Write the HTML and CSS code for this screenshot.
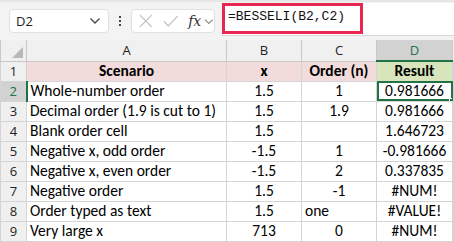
FILE: index.html
```html
<!DOCTYPE html>
<html>
<head>
    <title>BESSELI</title>
    <link rel="stylesheet" href="styles.css">
</head>
<body>
    <div class="toolbar">
        <div class="name-box">
            <span>D2</span>
            <svg class="chevron" width="12" height="8" viewBox="0 0 12 8"><path d="M1.5 1.5 L6 6 L10.5 1.5" fill="none" stroke="#444" stroke-width="1.3"/></svg>
        </div>
        <div class="dots"><i></i><i></i><i></i></div>
        <div class="fx-box">
            <svg width="14" height="14" viewBox="0 0 14 14"><path d="M1 1 L13 13 M13 1 L1 13" stroke="#bdbdbd" stroke-width="1.2"/></svg>
            <svg width="16" height="14" viewBox="0 0 16 14"><path d="M1 7.5 L5.5 12 L15 2" fill="none" stroke="#bdbdbd" stroke-width="1.2"/></svg>
            <span class="fx">fx</span>
            <svg width="10" height="7" viewBox="0 0 10 7"><path d="M1 1.5 L5 5.5 L9 1.5" fill="none" stroke="#888" stroke-width="1.1"/></svg>
        </div>
        <div class="formula-bar">
            <div class="formula">=BESSELI(B2,C2)</div>
        </div>
    </div>

    <table class="sheet">
        <colgroup>
            <col class="c-hdr"><col class="c-a"><col class="c-b"><col class="c-c"><col class="c-d"><col>
        </colgroup>
        <tr class="col-heads">
            <th class="corner"><span class="tri"></span></th>
            <th>A</th><th>B</th><th>C</th><th class="sel">D</th><th class="rest"></th>
        </tr>
        <tr>
            <th class="row-head">1</th>
            <td class="title">Scenario</td><td class="title">x</td><td class="title">Order (n)</td><td class="title result">Result</td><td class="rest"></td>
        </tr>
        <tr>
            <th class="row-head sel">2</th>
            <td>Whole-number order</td><td class="num">1.5</td><td class="num">1</td><td class="num active">0.981666<span class="handle"></span></td><td class="rest"></td>
        </tr>
        <tr>
            <th class="row-head">3</th>
            <td>Decimal order (1.9 is cut to 1)</td><td class="num">1.5</td><td class="num">1.9</td><td class="num">0.981666</td><td class="rest"></td>
        </tr>
        <tr>
            <th class="row-head">4</th>
            <td>Blank order cell</td><td class="num">1.5</td><td class="num"></td><td class="num">1.646723</td><td class="rest"></td>
        </tr>
        <tr>
            <th class="row-head">5</th>
            <td>Negative x, odd order</td><td class="num">-1.5</td><td class="num">1</td><td class="num">-0.981666</td><td class="rest"></td>
        </tr>
        <tr>
            <th class="row-head">6</th>
            <td>Negative x, even order</td><td class="num">-1.5</td><td class="num">2</td><td class="num">0.337835</td><td class="rest"></td>
        </tr>
        <tr>
            <th class="row-head">7</th>
            <td>Negative order</td><td class="num">1.5</td><td class="num">-1</td><td class="num">#NUM!</td><td class="rest"></td>
        </tr>
        <tr>
            <th class="row-head">8</th>
            <td>Order typed as text</td><td class="num">1.5</td><td>one</td><td class="num">#VALUE!</td><td class="rest"></td>
        </tr>
        <tr>
            <th class="row-head">9</th>
            <td>Very large x</td><td class="num">713</td><td class="num">0</td><td class="num">#NUM!</td><td class="rest"></td>
        </tr>
    </table>
</body>
</html>
```

FILE: styles.css
```css
* {
    box-sizing: border-box;
}
body {
    margin: 0;
    width: 454px;
    height: 242px;
    overflow: hidden;
    background: #ffffff;
    font-family: Carlito, Lato, "Liberation Sans", sans-serif;
}
.toolbar {
    height: 40px;
    display: flex;
    align-items: center;
    background: #f3f3f3;
    border-top: 2px solid #e6e6e6;
}
.name-box {
    width: 100px;
    height: 24px;
    margin-left: 9px;
    display: flex;
    align-items: center;
    justify-content: space-between;
    padding: 0 7px 0 6px;
    background: #ffffff;
    border: 1px solid #e0e0e0;
    border-radius: 4px;
    font-family: "Open Sans", sans-serif;
    font-size: 13px;
    color: #1f1f1f;
}
.dots {
    width: 22px;
    display: flex;
    flex-direction: column;
    align-items: center;
    gap: 2px;
}
.dots i {
    width: 2px;
    height: 2px;
    background: #444;
}
.fx-box {
    width: 84px;
    height: 24px;
    display: flex;
    align-items: center;
    gap: 10px;
    padding-left: 7px;
    background: #ffffff;
    border: 1px solid #e0e0e0;
    border-radius: 4px;
}
.fx-box .fx {
    font-family: "DejaVu Serif", serif;
    font-style: italic;
    font-size: 14px;
    color: #333;
    margin-right: -7px;
}
.formula-bar {
    flex: 1;
    align-self: stretch;
    margin: 1px 0 4px 7px;
    background: #ffffff;
    border-bottom: 1px solid #d6d6d6;
}
.formula {
    width: 141px;
    height: 31px;
    border: 3px solid #e8264f;
    padding: 3px 0 0 3px;
    font-family: "Liberation Mono", monospace;
    font-size: 13px;
    color: #111;
}
.sheet {
    border-collapse: collapse;
    table-layout: fixed;
    width: 454px;
    font-size: 15.5px;
    color: #000;
}
.c-hdr { width: 26px; }
.c-a { width: 200px; }
.c-b { width: 75px; }
.c-c { width: 75px; }
.c-d { width: 76px; }
.sheet th,
.sheet td {
    height: 20px;
    padding: 0 3px;
    border: 1px solid #d4d4d4;
    white-space: nowrap;
    overflow: hidden;
    line-height: 18px;
}
.col-heads th {
    height: 21px;
    background: #f0f0f0;
    font-weight: normal;
    color: #222;
    border-color: #c8c8c8;
    border-top: none;
    font-family: "Open Sans", sans-serif;
    font-size: 13px;
}
.col-heads th.sel {
    background: #d2d2d2;
    color: #217346;
    border-bottom: 2px solid #217346;
}
.corner {
    position: relative;
}
.tri {
    position: absolute;
    right: 3px;
    bottom: 3px;
    width: 0;
    height: 0;
    border-left: 11px solid transparent;
    border-bottom: 11px solid #b8b8b8;
}
.row-head {
    background: #f0f0f0;
    font-weight: normal;
    color: #222;
    text-align: center;
    border-color: #c8c8c8;
    font-family: "Open Sans", sans-serif;
    font-size: 13px;
    border-left: none;
}
.row-head.sel {
    background: #d2d2d2;
    color: #217346;
    border-right: 2px solid #217346;
}
.title {
    background: #f2dcdb;
    font-weight: bold;
    text-align: center;
}
.title.result {
    background: #d8e4bc;
}
.num {
    text-align: center;
}
.active {
    position: relative;
    outline: 2px solid #217346;
    outline-offset: -2px;
}
.handle {
    position: absolute;
    right: -2px;
    bottom: -2px;
    width: 5px;
    height: 5px;
    background: #217346;
    border: 1px solid #ffffff;
}
.rest {
    border: none;
    border-left: 1px solid #d4d4d4;
}
.col-heads th.rest {
    background: #f0f0f0;
    border: none;
}
```
